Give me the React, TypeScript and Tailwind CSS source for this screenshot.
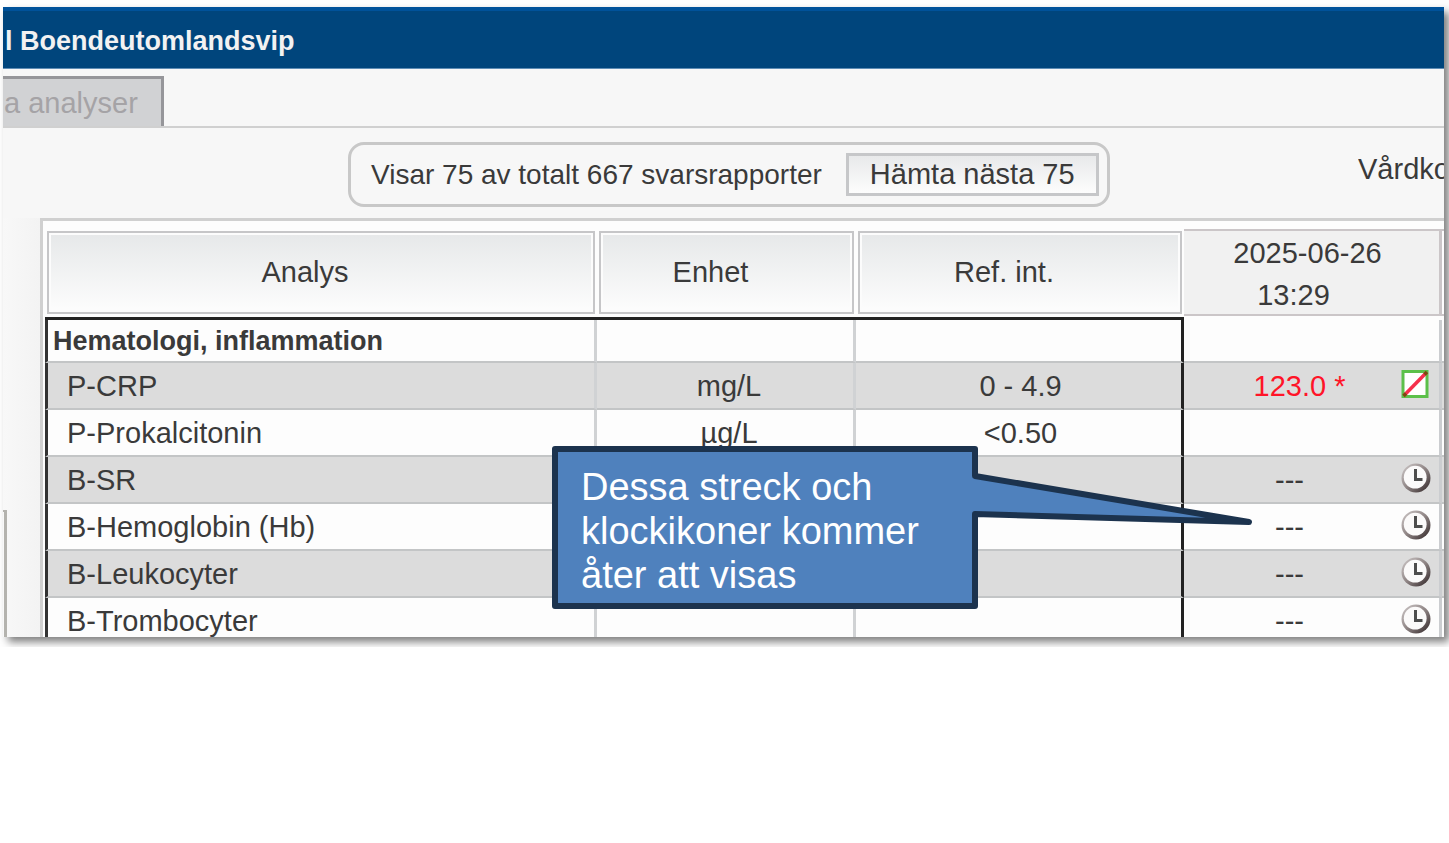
import clsx from "clsx";

type Status = "seen" | "pending";

type Row = {
  name: string;
  unit?: string;
  range?: string;
  value?: string;
  status?: Status;
  group?: boolean;
};

const rows: Row[] = [
  { name: "Hematologi, inflammation", group: true },
  {
    name: "P-CRP",
    unit: "mg/L",
    range: "0 - 4.9",
    value: "123.0 *",
    status: "seen",
  },
  { name: "P-Prokalcitonin", unit: "µg/L", range: "<0.50" },
  { name: "B-SR", value: "---", status: "pending" },
  { name: "B-Hemoglobin (Hb)", value: "---", status: "pending" },
  { name: "B-Leukocyter", value: "---", status: "pending" },
  { name: "B-Trombocyter", value: "---", status: "pending" },
];

const ClockIcon = () => (
  <svg viewBox="0 0 30 30" className="mb-1 size-[30px] shrink-0">
    <defs>
      <linearGradient id="clock-rim" x1="0" y1="0" x2="1" y2="1">
        <stop offset="0.15" stopColor="#bdb6b6" />
        <stop offset="0.5" stopColor="#8f8585" />
        <stop offset="0.85" stopColor="#4a3f40" />
      </linearGradient>
    </defs>
    <circle cx="15" cy="15" r="14.5" fill="url(#clock-rim)" />
    <circle cx="14.2" cy="14.2" r="11.4" fill="#fbfafa" />
    <path d="M14.5 6V16.500H21.5" fill="none" stroke="#4d4d4d" strokeWidth="3" />
  </svg>
);

const SeenIcon = () => (
  <svg viewBox="0 0 30 30" className="mb-1 size-[30px] shrink-0">
    <rect
      x="2"
      y="2.5"
      width="24"
      height="25"
      fill="#fff"
      stroke="#5cc04a"
      strokeWidth="3"
    />
    <path d="M3 26.5L25.5 3.5" stroke="#f5304c" strokeWidth="3.5" />
    <path
      d="M2.5 27L5 24.5M23.5 5.5L26 3"
      stroke="#7c4a10"
      strokeWidth="3.5"
    />
  </svg>
);

const HeaderButton = ({ label }: { label: string }) => (
  <button
    type="button"
    className="block h-[83px] w-full border-2 border-[#c6c6c8] bg-linear-to-b from-[#e6e8e9] to-[#fdfdfd] pr-8 pb-[2px] shadow-[inset_0_0_0_2px_#fcfcfc]"
  >
    {label}
  </button>
);

const Callout = () => (
  <aside className="absolute top-[439px] right-[190px] h-[163px] w-[702px]">
    <svg
      viewBox="0 0 702 163"
      className="absolute inset-0 size-full overflow-visible"
    >
      <path
        d="M3 3H423V30L697 76L423 68V160H3Z"
        fill="#4f81bd"
        stroke="#1c334e"
        strokeWidth="6"
        strokeLinejoin="round"
      />
    </svg>
    <p className="relative w-[400px] pt-[19px] pl-[29px] text-[38px] leading-[44px] text-white">
      Dessa streck och
      <br />
      klockikoner kommer
      <br />
      åter att visas
    </p>
  </aside>
);

const ResultRow = ({ row, striped }: { row: Row; striped: boolean }) => {
  const cell = "border-b-2 border-b-[#c3c5c6] p-0";

  return (
    <tr
      className={clsx(
        row.group ? "h-[43px]" : "h-[47px]",
        striped ? "bg-[#dcdcdc]" : "bg-[#fdfdfd]"
      )}
    >
      <th
        scope="row"
        className={clsx(
          cell,
          "border-r-3 border-l-3 border-r-[#d0d2d4] border-l-[#333] text-left whitespace-nowrap",
          row.group ? "pl-[5px] text-[27px] font-bold" : "pl-[19px] font-normal"
        )}
      >
        {row.name}
      </th>
      <td
        className={clsx(cell, "border-r-3 border-r-[#d0d2d4] pl-2 text-center")}
      >
        {row.unit}
      </td>
      <td className={clsx(cell, "border-r-3 border-r-[#222] pl-1 text-center")}>
        {row.range}
      </td>
      <td className={clsx(cell, "border-r-3 border-r-[#cbcdd0]")}>
        <div className="flex items-center pr-2">
          <span
            className={clsx(
              "flex-1 pl-[14px] text-center",
              row.status === "seen" ? "text-[#ff1428]" : "pr-5"
            )}
          >
            {row.value}
          </span>
          {row.status === "seen" && <SeenIcon />}
          {row.status === "pending" && <ClockIcon />}
        </div>
      </td>
      <td className={cell} />
    </tr>
  );
};

const ResultTable = () => (
  <table className="-mb-2 w-full table-fixed border-separate border-spacing-0">
    <colgroup>
      <col />
      <col className="w-[259px]" />
      <col className="w-[328px]" />
      <col className="w-[258px]" />
      <col className="w-[2px]" />
    </colgroup>
    <thead>
      <tr className="h-[99px]">
        {["Analys", "Enhet", "Ref. int."].map((label) => (
          <th
            key={label}
            className="border-b-3 border-[#222] px-[2px] pt-[10px] pb-[3px] align-top font-normal"
          >
            <HeaderButton label={label} />
          </th>
        ))}
        <th className="p-0 pt-2 align-top font-normal">
          <div className="h-[87px] border-y-2 border-r-3 border-[#cbc6c8] bg-[#f1f1f1] pt-px leading-[42px]">
            <div className="pr-2">2025-06-26</div>
            <div className="pr-9">13:29</div>
          </div>
        </th>
        <th className="p-0 pt-2 align-top">
          <div className="h-[87px] border-y-2 border-[#cbc6c8]" />
        </th>
      </tr>
    </thead>
    <tbody className="leading-[40px]">
      {rows.map((row, i) => (
        <ResultRow key={row.name} row={row} striped={i % 2 === 1} />
      ))}
    </tbody>
  </table>
);

export default function App() {
  return (
    <div className="min-h-screen bg-white font-['Liberation_Sans',Arial,sans-serif] text-[29px] leading-[42px] text-[#3a3a3a]">
      <div className="overflow-hidden pt-[7px] pr-[5px] pb-[10px] pl-[3px]">
        <main className="relative bg-[#f7f7f7] shadow-[5px_5px_8px_0_rgba(0,0,0,0.5)]">
          <header className="h-[62px] border-t-4 border-b border-t-[#00529a] border-b-[#5f8db5] bg-[#00457c] pt-[9px] pl-[2px]">
            <h1 className="text-[27px] font-bold text-[#f2f2f2]">
              l Boendeutomlandsvip
            </h1>
          </header>

          <nav className="flex border-b-2 border-[#d0d0d0] pt-[7px]">
            <button
              type="button"
              className="h-[50px] border-t-3 border-r-3 border-[#96969a] bg-[#d1d2d4] pr-[23px] pl-px text-[#a5a3a6]"
            >
              a analyser
            </button>
          </nav>

          <div className="flex items-start justify-between pt-[14px] pb-[11px] pl-[345px]">
            <div className="flex h-[65px] items-center gap-6 rounded-2xl border-3 border-[#c8c8c8] pr-2 pl-5 whitespace-nowrap">
              <span className="text-[28px]">
                Visar 75 av totalt 667 svarsrapporter
              </span>
              <button
                type="button"
                className="h-[43px] border-3 border-[#c6c7c9] bg-linear-to-b from-[#e8e9ea] to-[#fdfdfd] px-[21px] leading-[37px]"
              >
                Hämta nästa 75
              </button>
            </div>
            <div className="w-[86px] overflow-hidden pt-[6px] whitespace-nowrap">
              Vårdko
            </div>
          </div>

          <div className="flex">
            <div className="flex w-[37px] shrink-0 flex-col justify-end bg-linear-to-r from-[#f8f8f8] to-[#f3f3f3]">
              <div className="h-[127px] w-1 border-t-2 border-r-3 border-[#b4b3ae]" />
            </div>
            <div className="min-w-0 flex-1 overflow-hidden border-t-3 border-l-3 border-[#d0d0d0] bg-[#fdfdfd] pl-[2px]">
              <ResultTable />
            </div>
          </div>

          <Callout />
        </main>
      </div>
    </div>
  );
}
